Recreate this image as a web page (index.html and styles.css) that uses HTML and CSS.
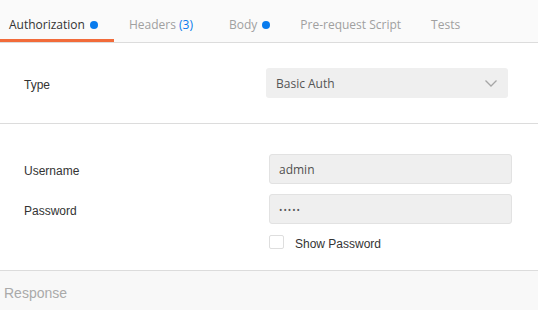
FILE: index.html
```html
<!DOCTYPE html>
<html>
<head>
<meta charset="utf-8">
<link rel="stylesheet" href="styles.css">
</head>
<body>
<div class="page">
  <nav class="tabs">
    <div class="tab tab-first active">Authorization<span class="dot"></span></div>
    <div class="tab">Headers <span class="count">(3)</span></div>
    <div class="tab">Body<span class="dot"></span></div>
    <div class="tab">Pre-request Script</div>
    <div class="tab">Tests</div>
  </nav>
  <section class="type-section">
    <div class="label">Type</div>
    <div class="select">
      <span>Basic Auth</span>
      <svg class="chevron" width="12" height="7" viewBox="0 0 12 7"><path d="M0.5 0.5 L6 6 L11.5 0.5" fill="none" stroke="#a6a6a6" stroke-width="1.3"/></svg>
    </div>
  </section>
  <section class="cred-section">
    <div class="label">Username</div>
    <div class="input">admin</div>
    <div class="label">Password</div>
    <div class="input pw">•••••</div>
    <div></div>
    <label class="check"><span class="box"></span><span class="check-text">Show Password</span></label>
  </section>
  <div class="response">Response</div>
</div>
</body>
</html>
```

FILE: styles.css
```css
* { box-sizing: border-box; }
html, body { margin: 0; padding: 0; background: #fff; }
.page {
  width: 538px;
  height: 310px;
  display: flex;
  flex-direction: column;
  overflow: hidden;
  font-family: "Liberation Sans", Arial, sans-serif;
}
.tabs {
  display: flex;
  height: 43px;
  background: #fafafa;
  border-bottom: 1px solid #dcdcdc;
  font-family: "Open Sans", sans-serif;
  font-size: 12px;
}
.tab {
  display: flex;
  align-items: center;
  padding: 10px 15px 0;
  color: #a0a0a0;
  border-bottom: 3px solid transparent;
  white-space: pre;
}
.tab-first { padding-left: 9px; padding-right: 16px; }
.tab.active {
  color: #333;
  border-bottom-color: #f26b3a;
}
.dot {
  display: inline-block;
  width: 8px;
  height: 8px;
  border-radius: 50%;
  background: #097bed;
  margin-left: 5px;
}
.count { color: #097bed; margin-right: 6px; }
.label {
  font-size: 12px;
  color: #333;
  padding-top: 3px;
}
.type-section {
  display: grid;
  grid-template-columns: 242px 242px;
  align-items: center;
  padding: 25px 0 25px 24px;
  border-bottom: 1px solid #dcdcdc;
}
.select {
  height: 30px;
  background: #efefef;
  border-radius: 3px;
  display: flex;
  align-items: center;
  justify-content: space-between;
  padding: 0 11px 0 10px;
  font-family: "Open Sans", sans-serif;
  font-size: 12px;
  color: #555;
}
.chevron { display: block; }
.cred-section {
  display: grid;
  grid-template-columns: 245px 243px;
  grid-template-rows: 30px 30px 14px;
  row-gap: 10px;
  align-items: center;
  padding: 30px 0 22px 24px;
}
.cred-section .check { margin-top: 2px; }
.input {
  height: 30px;
  background: #efefef;
  border: 1px solid #e2e2e2;
  border-radius: 3px;
  display: flex;
  align-items: center;
  padding: 0 9px;
  font-family: "Open Sans", sans-serif;
  font-size: 12px;
  color: #505050;
}
.input.pw { font-size: 9px; letter-spacing: 1px; color: #555; }
.check {
  display: flex;
  align-items: center;
  font-size: 12px;
  color: #333;
}
.check-text { padding-top: 3px; }
.box {
  width: 15px;
  height: 14px;
  border: 1px solid #dedede;
  border-radius: 2px;
  background: #fff;
  margin-right: 11px;
}
.response {
  flex: 1;
  background: #f8f8f8;
  border-top: 1px solid #dcdcdc;
  padding: 14px 0 0 4px;
  font-size: 14px;
  color: #aaa;
}
```
